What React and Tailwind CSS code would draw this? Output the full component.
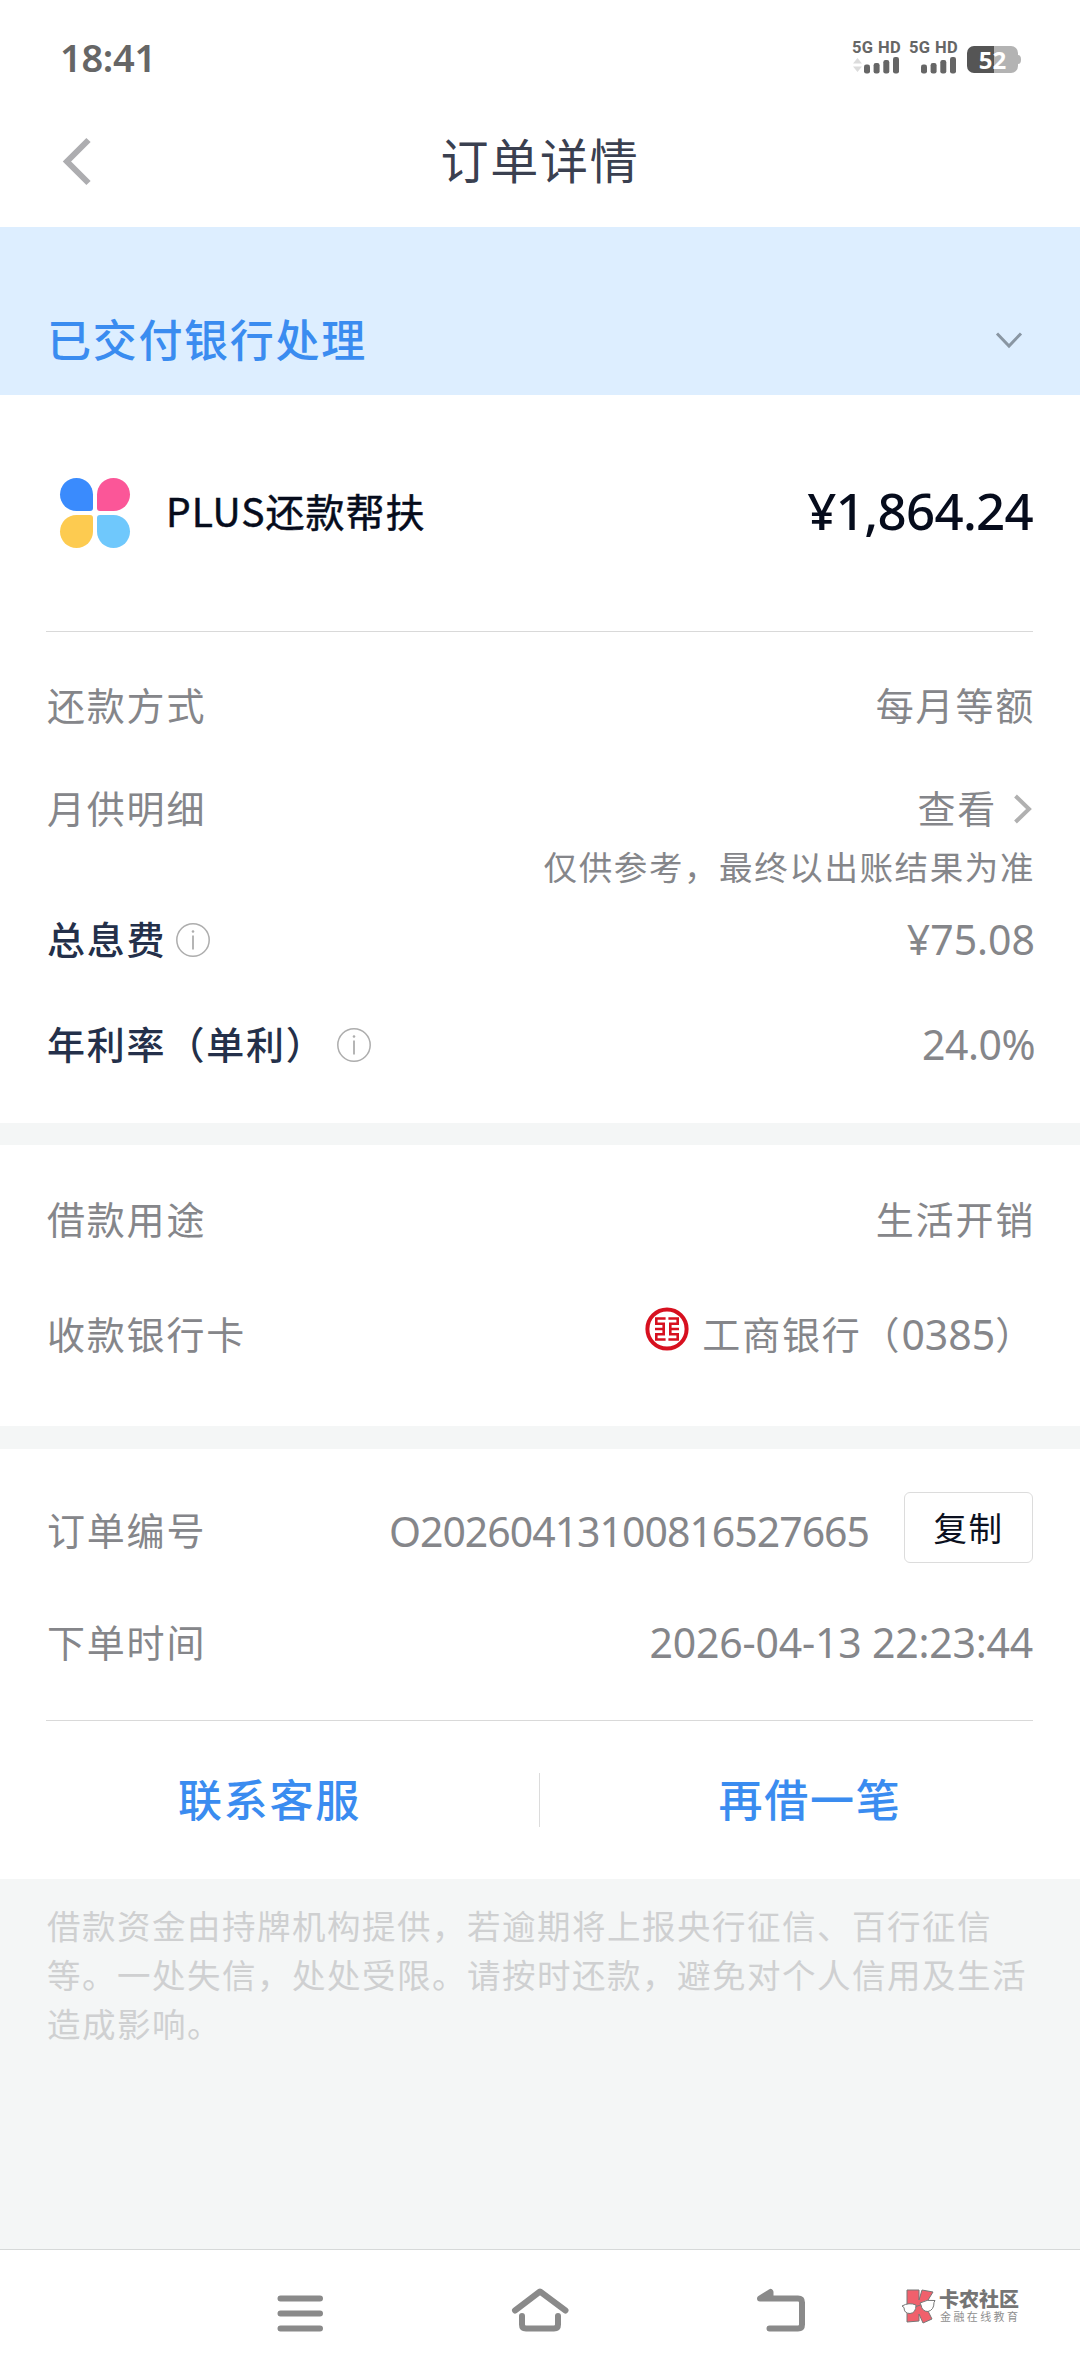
import React from "react";

const order = {
  product: "PLUS还款帮扶",
  amount: "¥1,864.24",
  orderNo: "O20260413100816527665",
  createdAt: "2026-04-13 22:23:44",
};

// Small "i" icon next to the fee labels
function InfoIcon({ className }) {
  return (
    <svg className={className} width="36" height="36" viewBox="0 0 36 36" fill="none">
      <circle cx="18" cy="18" r="16.2" stroke="#adadad" strokeWidth="1.5" />
      <circle cx="18" cy="9.5" r="1.3" fill="#adadad" />
      <path d="M18 13.5v14" stroke="#adadad" strokeWidth="1.8" />
    </svg>
  );
}

// 5G HD + signal bars
function Signal({ arrows }) {
  return (
    <div className="flex flex-col w-[48px] h-[34px]">
      <span className="h-[16px] text-[16.5px] leading-[15px] font-bold whitespace-nowrap tracking-[0.4px] text-[#666] font-['Roboto','Noto_Sans',sans-serif]">
        5G HD
      </span>
      <svg width="48" height="18" viewBox="0 0 48 18">
        {arrows && <path d="M1 7.5L5.5 2L10 7.5zM1 10.5L5.5 16L10 10.5z" fill="#dcdcdc" />}
        <g fill="#666">
          <rect x="12" y="8.5" width="6" height="9" rx="2.2" />
          <rect x="21.6" y="7" width="6" height="10.5" rx="2.2" />
          <rect x="31.3" y="4" width="6" height="13.5" rx="2.2" />
          <rect x="41" y="1" width="6" height="16.5" rx="2.2" />
        </g>
      </svg>
    </div>
  );
}

function StatusBar() {
  return (
    <div className="flex justify-between h-[96px] pl-[60px] pr-[59px]">
      <span className="mt-[35px] text-[38px] leading-[44px] font-semibold tracking-[-0.3px] text-[#666] font-['Noto_Sans',sans-serif]">
        18:41
      </span>
      <div className="flex mt-[40px]">
        <Signal arrows />
        <div className="w-[9px]" />
        <Signal />
        <div className="relative ml-[10px] mt-[6px] w-[54px] h-[27px]">
          <svg width="54" height="27" viewBox="0 0 54 27">
            <path d="M27 0H44a7 7 0 0 1 7 7v2c2 0 3 1.5 3 4.5s-1 4.5-3 4.5v2a7 7 0 0 1-7 7H27z" fill="#b3b3b3" />
            <path d="M27 0H7a7 7 0 0 0-7 7v13a7 7 0 0 0 7 7h20z" fill="#555" />
          </svg>
          <span className="absolute inset-y-0 left-0 w-[51px] text-center text-[24px] leading-[27px] font-bold text-white font-['Noto_Sans',sans-serif]">
            52
          </span>
        </div>
      </div>
    </div>
  );
}

function ProductLogo() {
  return (
    <div className="grid grid-cols-2 gap-[4px] w-[70px] h-[70px]">
      <div className="bg-[#3a8bfd] rounded-[17px] rounded-br-[3px]" />
      <div className="bg-[#fb5698] rounded-[17px] rounded-bl-[3px]" />
      <div className="bg-[#fdcb50] rounded-[17px] rounded-tr-[3px]" />
      <div className="bg-[#6fc8fc] rounded-[17px] rounded-tl-[3px]" />
    </div>
  );
}

function BankLogo() {
  return (
    <svg width="44" height="44" viewBox="0 0 44 44" fill="none">
      <circle cx="22" cy="22" r="19.6" stroke="#d7101f" strokeWidth="4" />
      <g stroke="#d7101f" strokeWidth="2.6">
        <path d="M20.6 11.5H11.3v5.2h7.4v10.6h-7.4v5.2h9.3M10 22h8.700" />
        <path d="M23.4 11.5h9.3v5.2h-7.4v10.6h7.4v5.2h-9.3M34 22h-8.700" />
      </g>
    </svg>
  );
}

function Row({ label, strong, info, className, children }) {
  return (
    <div className={className}>
      <div className="flex items-center">
        <span className={strong ? "font-medium text-[#24304a]" : "text-[#85868a]"}>{label}</span>
        {info}
      </div>
      <div className="flex items-center text-[#85868a]">{children}</div>
    </div>
  );
}

const num = "pt-[2px] text-[41px] font-['Noto_Sans','Noto_Sans_CJK_SC',sans-serif]";

function App() {
  return (
    <div className="flex flex-col w-[1080px] h-[2376px] overflow-hidden bg-white font-['Noto_Sans_CJK_SC',sans-serif]">
      <StatusBar />

      {/* Title bar */}
      <div className="grid grid-cols-3 items-center h-[131px] pb-[1px]">
        <svg className="ml-[60px]" width="36" height="50" viewBox="0 0 36 50" fill="none">
          <path d="M28.5 4L7 25.5L28.5 47" stroke="#adadb0" strokeWidth="6" />
        </svg>
        <h1 className="pb-[6px] text-center text-[48px] leading-[60px] tracking-[1.8px] text-[#3a4050]">订单详情</h1>
      </div>

      {/* Order state */}
      <div className="flex justify-between items-center h-[168px] pt-[56px] pl-[47px] pr-[56px] bg-[#ddeeff]">
        <span className="pb-[3px] text-[44px] leading-[60px] font-medium tracking-[1.7px] text-[#3a8cf0]">已交付银行处理</span>
        <svg width="30" height="20" viewBox="0 0 30 20" fill="none">
          <path d="M3 4.5L15 17L27 4.5" stroke="#8996a3" strokeWidth="3" />
        </svg>
      </div>

      {/* Product and amount */}
      <div className="flex items-center h-[237px] ml-[46px] mr-[47px] pl-[14px] border-b border-[#d9d9d9]">
        <ProductLogo />
        <span className="ml-[36px] pb-[6px] text-[39px] leading-[60px] tracking-[1px] text-[#060c1c] [-webkit-text-stroke:0.5px_#060c1c]">
          {order.product}
        </span>
        <span className="ml-auto pb-[6px] text-[51px] leading-[60px] font-medium tracking-[-0.7px] text-[#060c1c] font-['Noto_Sans',sans-serif]">
          {order.amount}
        </span>
      </div>

      {/* Repayment */}
      <div className="h-[491px] pt-[42px] pl-[47px] pr-[45px] text-[38px] leading-[60px] tracking-[1.8px]">
        <Row className="flex justify-between h-[60px]" label="还款方式">
          每月等额
        </Row>
        <Row className="flex justify-between h-[60px] mt-[43px]" label="月供明细">
          <span>查看</span>
          <svg className="ml-[14px] mt-[3px]" width="24" height="32" viewBox="0 0 24 32" fill="none">
            <path d="M4.5 3L18 16L4.5 29" stroke="#b0b0b0" strokeWidth="4" />
          </svg>
        </Row>
        <p className="h-[56px] text-right text-[33.5px] leading-[58px] tracking-[1.6px] text-[#85868a]">
          仅供参考，最终以出账结果为准
        </p>
        <Row
          className="flex justify-between h-[60px] mt-[15px]"
          label="总息费"
          strong
          info={<InfoIcon className="ml-[9px] mt-[3px]" />}
        >
          <span className={`${num} tracking-[0px]`}>¥75.08</span>
        </Row>
        <Row
          className="flex justify-between h-[60px] mt-[45px]"
          label="年利率（单利）"
          strong
          info={<InfoIcon className="ml-[10px] mt-[3px]" />}
        >
          <span className={`${num} tracking-[-0.5px]`}>24.0%</span>
        </Row>
      </div>

      <div className="h-[22px] bg-[#f4f6f6]" />

      {/* Purpose and bank card */}
      <div className="h-[281px] pt-[43px] pl-[47px] pr-[45px] text-[38px] leading-[60px] tracking-[1.8px]">
        <Row className="flex justify-between h-[60px]" label="借款用途">
          生活开销
        </Row>
        <Row className="flex justify-between h-[60px] mt-[55px]" label="收款银行卡">
          <div className="pb-[8px]">
            <BankLogo />
          </div>
          <span className="ml-[13px]">工商银行（</span>
          <span className={`${num} tracking-[0px]`}>0385</span>
          <span>）</span>
        </Row>
      </div>

      <div className="h-[23px] bg-[#f4f6f6]" />

      {/* Order number and time */}
      <div className="h-[272px] ml-[46px] mr-[47px] pt-[43px] border-b border-[#d9d9d9] text-[38px] leading-[60px] tracking-[1.8px]">
        <Row className="flex justify-between items-center h-[70px] pl-px [&>div:first-child]:pt-[3px]" label="订单编号">
          <span className={`${num} mt-[5px] tracking-[-1px]`}>{order.orderNo}</span>
          <button className="ml-[35px] w-[129px] h-[71px] border border-[#dcdcdc] rounded-[6px] text-[33.5px] leading-[66px] tracking-[1.6px] text-[#0b1020]">
            复制
          </button>
        </Row>
        <Row className="flex justify-between h-[60px] pl-px mt-[49px]" label="下单时间">
          <span className={`${num} tracking-[-0.2px]`}>{order.createdAt}</span>
        </Row>
      </div>

      {/* Actions */}
      <div className="flex items-center h-[158px] text-[44px] leading-[60px] font-medium tracking-[1.7px] text-[#3a8cf0]">
        <button className="w-[539px] pb-[4px] text-center">联系客服</button>
        <div className="w-px h-[54px] bg-[#dcdcdc]" />
        <button className="flex-1 pb-[4px] text-center">再借一笔</button>
      </div>

      {/* Notice */}
      <div className="flex-1 pt-[21px] pl-[47px] pr-[40px] bg-[#f4f6f6]">
        <p className="text-[33.5px] leading-[49px] tracking-[1.5px] whitespace-nowrap text-[#cfd0d1]">
          借款资金由持牌机构提供，若逾期将上报央行征信、百行征信
          <br />
          等。一处失信，处处受限。请按时还款，避免对个人信用及生活
          <br />
          造成影响。
        </p>
      </div>

      {/* System navigation */}
      <div className="flex h-[127px] pl-[270px] border-t border-[#d6d9d9]">
        <svg className="mt-[33px]" width="60" height="60" viewBox="0 0 60 60" fill="none">
          <path d="M10.5 15.5H50M10.5 30.5H50M10.5 45.5H50" stroke="#8a8a8a" strokeWidth="6" strokeLinecap="round" />
        </svg>
        <svg className="mt-[33px] ml-[180px]" width="60" height="60" viewBox="0 0 60 60" fill="none">
          <g stroke="#8a8a8a" strokeWidth="6" strokeLinecap="round" strokeLinejoin="round">
            <path d="M5 27.5L30 8.5L55.5 27.5" />
            <path d="M12 33v8.500q0 4 4 4H44q4 0 4-4V33" />
          </g>
        </svg>
        <svg className="mt-[33px] ml-[181px]" width="60" height="60" viewBox="0 0 60 60" fill="none">
          <g stroke="#8a8a8a" strokeWidth="6" strokeLinecap="round" strokeLinejoin="round">
            <path d="M18.5 45.5H47q4 0 4-4V19.5q0-4-4-4H9L19.5 9v4" />
          </g>
        </svg>
        <div className="flex mt-[38px] ml-[90px]">
          <svg width="36" height="38" viewBox="0 0 36 38">
            <g stroke="#777" strokeWidth="1">
              <path d="M6 2H18V12L21 2L32 4L24 17L31 31L22 35L18 26V33L6 34V20z" fill="#f0606c" />
              <path d="M1 18Q8 14 15 17Q15 25 9 25.5Q3 25.5 3 19.5z" fill="#fff" />
              <path d="M19 15Q26 11 34 12.5L33 14.5Q33 22 27 23.5Q21 23.5 20 17z" fill="#fff" />
              <path d="M15 18.5L19.5 17" fill="none" />
            </g>
          </svg>
          <div className="flex flex-col ml-[2px]">
            <span className="h-[22px] text-[20px] leading-[22px] font-black text-[#757575] whitespace-nowrap">卡农社区</span>
            <span className="h-[12px] pl-px text-[11px] leading-[12px] tracking-[2.4px] text-[#8f8f8f] whitespace-nowrap">
              金融在线教育
            </span>
          </div>
        </div>
      </div>
    </div>
  );
}

export default App;
